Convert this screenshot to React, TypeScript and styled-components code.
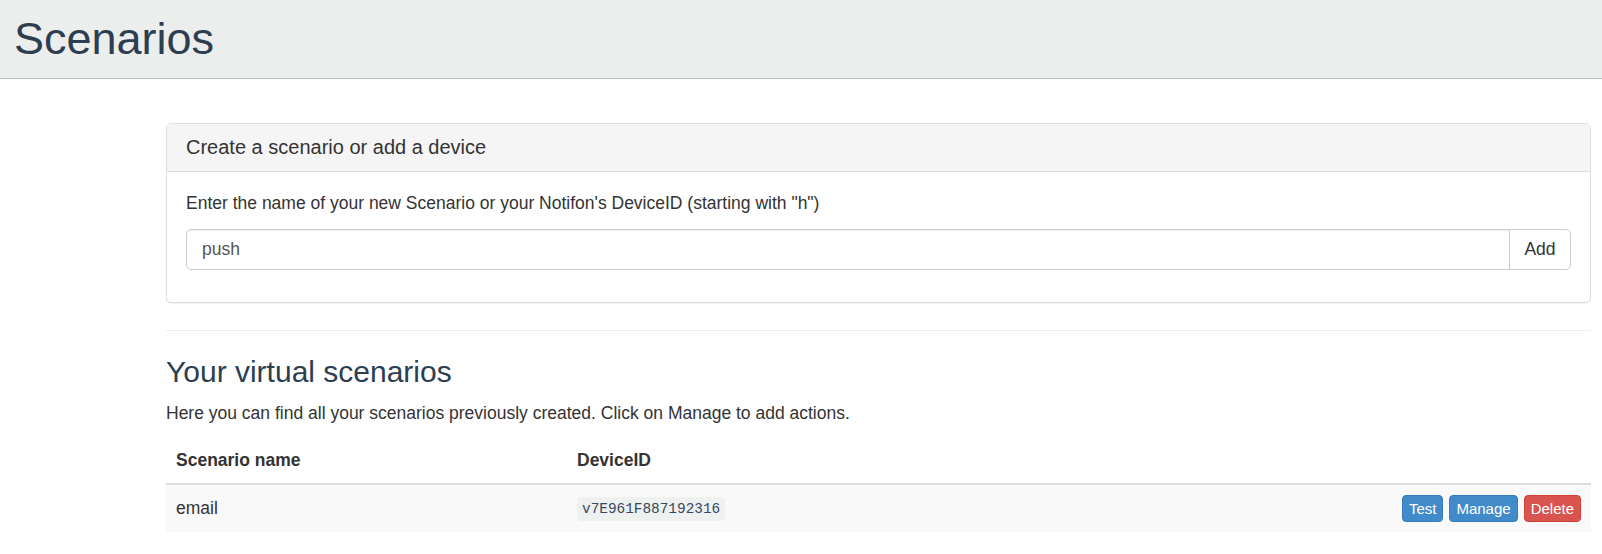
import React from "react";
import styled, { createGlobalStyle } from "styled-components";

const Global = createGlobalStyle`
  html, body { margin: 0; padding: 0; background: #fff; }
  body {
    font-family: "Liberation Sans", Arial, sans-serif;
    font-size: 17.5px;
    line-height: 25px;
    color: #333;
  }
  * { box-sizing: border-box; }
`;

const TopBar = styled.header`
  height: 79px;
  background: #eceeee;
  border-bottom: 1px solid #babdc0;
  display: flex;
  align-items: center;
  padding-left: 14px;
`;

const PageTitle = styled.h1`
  margin: 0;
  font-size: 45px;
  font-weight: 400;
  line-height: 1.1;
  color: #2c3e50;
`;

const Container = styled.main`
  padding: 44px 11px 0 166px;
`;

const Panel = styled.section`
  border: 1px solid #ddd;
  border-radius: 5px;
  background: #fff;
  box-shadow: 0 1px 1px rgba(0, 0, 0, 0.05);
`;

const PanelHeading = styled.div`
  background: #f5f5f5;
  border-bottom: 1px solid #ddd;
  border-radius: 4px 4px 0 0;
  padding: 11px 19px 11px;
  font-size: 20px;
  line-height: 25px;
  color: #333;
`;

const PanelBody = styled.div`
  padding: 19px 19px 19px;
`;

const Hint = styled.p`
  margin: 0 0 13px;
`;

const InputGroup = styled.div`
  display: flex;
  margin-bottom: 13px;
`;

const TextInput = styled.input`
  flex: 1;
  height: 41px;
  border: 1px solid #ccc;
  border-radius: 5px 0 0 5px;
  padding: 0 15px;
  font-family: inherit;
  font-size: 17.5px;
  color: #555;
  box-shadow: inset 0 1px 1px rgba(0, 0, 0, 0.075);
  outline: none;
`;

const AddButton = styled.button`
  height: 41px;
  width: 62px;
  margin-left: -1px;
  border: 1px solid #ccc;
  border-radius: 0 5px 5px 0;
  background: #fff;
  font-family: inherit;
  font-size: 17.5px;
  color: #333;
  padding: 0;
`;

const Divider = styled.hr`
  margin: 27px 0 0;
  border: 0;
  border-top: 1px solid #eee;
`;

const SectionTitle = styled.h2`
  margin: 24px 0 13px;
  font-size: 30px;
  font-weight: 400;
  line-height: 33px;
  color: #2c3e50;
`;

const Lead = styled.p`
  margin: 0 0 12px;
`;

const Table = styled.table`
  width: 100%;
  border-collapse: collapse;
  border-spacing: 0;
`;

const HeadCell = styled.th<{ $w?: string }>`
  text-align: left;
  font-weight: 700;
  padding: 10px;
  border-bottom: 2px solid #ddd;
  line-height: 25px;
  width: ${(p) => p.$w || "auto"};
`;

const Row = styled.tr`
  background: #f9f9f9;
`;

const Cell = styled.td<{ $align?: string }>`
  padding: 10px;
  line-height: 25px;
  vertical-align: middle;
  text-align: ${(p) => p.$align || "left"};
`;

const Code = styled.code`
  font-family: "Liberation Mono", "DejaVu Sans Mono", monospace;
  font-size: 14.4px;
  color: #34495e;
  background: #eff0f0;
  border-radius: 4px;
  padding: 4px 5px;
`;

const Actions = styled.div`
  display: flex;
  justify-content: flex-end;
  gap: 6px;
`;

const SmallButton = styled.button<{ $variant: "primary" | "danger" }>`
  height: 27px;
  padding: 0 6px;
  border-radius: 4px;
  font-family: inherit;
  font-size: 15px;
  line-height: 25px;
  color: #fff;
  background: ${(p) => (p.$variant === "danger" ? "#d9534f" : "#428bca")};
  border: 1px solid ${(p) => (p.$variant === "danger" ? "#d43f3a" : "#357ebd")};
`;

export default function App() {
  return (
    <>
      <Global />
      <TopBar>
        <PageTitle>Scenarios</PageTitle>
      </TopBar>
      <Container>
        <Panel>
          <PanelHeading>Create a scenario or add a device</PanelHeading>
          <PanelBody>
            <Hint>
              Enter the name of your new Scenario or your Notifon's DeviceID
              (starting with "h")
            </Hint>
            <InputGroup>
              <TextInput defaultValue="push" />
              <AddButton>Add</AddButton>
            </InputGroup>
          </PanelBody>
        </Panel>
        <Divider />
        <SectionTitle>Your virtual scenarios</SectionTitle>
        <Lead>
          Here you can find all your scenarios previously created. Click on
          Manage to add actions.
        </Lead>
        <Table>
          <thead>
            <tr>
              <HeadCell $w="401px">Scenario name</HeadCell>
              <HeadCell>DeviceID</HeadCell>
              <HeadCell />
            </tr>
          </thead>
          <tbody>
            <Row>
              <Cell>email</Cell>
              <Cell>
                <Code>v7E961F887192316</Code>
              </Cell>
              <Cell $align="right">
                <Actions>
                  <SmallButton $variant="primary">Test</SmallButton>
                  <SmallButton $variant="primary">Manage</SmallButton>
                  <SmallButton $variant="danger">Delete</SmallButton>
                </Actions>
              </Cell>
            </Row>
          </tbody>
        </Table>
      </Container>
    </>
  );
}
